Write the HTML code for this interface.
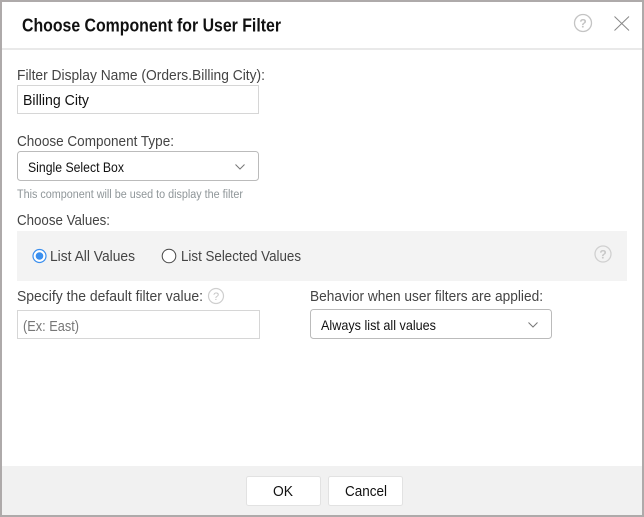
<!DOCTYPE html>
<html><head><meta charset="utf-8"><style>
html,body{margin:0;padding:0;background:#fff;width:644px;height:517px;overflow:hidden}
svg{display:block}
text{font-family:"Liberation Sans",sans-serif;font-size:15px;fill:#444}
.d{fill:#111}
.h{font-size:11.500px;fill:#8f9699}
</style></head><body>
<svg width="644" height="517" viewBox="0 0 644 517" xmlns="http://www.w3.org/2000/svg">
<rect width="644" height="517" fill="#fff"/>
<rect x="2" y="466" width="640" height="49" fill="#f1f1f1"/>
<path d="M1 1H643V516H1Z" fill="none" stroke="#aeaaaa" stroke-width="2"/>
<rect x="2" y="48" width="640" height="2" fill="#e9e9e9"/>
<text x="22" y="31.500" class="d" style="font-size:18px;font-weight:bold" textLength="259" lengthAdjust="spacingAndGlyphs">Choose Component for User Filter</text>
<circle cx="583" cy="23" r="8.500" fill="none" stroke="#c4c4c4" stroke-width="1.300"/>
<text x="583" y="27.500" text-anchor="middle" style="font-size:12px;font-weight:bold;fill:#c4c4c4">?</text>
<path d="M614.500 16.500L629 30.500M629 16.500L614.500 30.500" stroke="#888" stroke-width="1" fill="none"/>
<text x="17" y="80" textLength="248" lengthAdjust="spacingAndGlyphs">Filter Display Name (Orders.Billing City):</text>
<rect x="17.500" y="85.500" width="241" height="28" fill="#fff" stroke="#d6d6d6"/>
<text x="23" y="105" class="d" textLength="66" lengthAdjust="spacingAndGlyphs">Billing City</text>
<text x="17" y="146" textLength="157" lengthAdjust="spacingAndGlyphs">Choose Component Type:</text>
<rect x="17.500" y="151.500" width="241" height="29" rx="3" fill="#fff" stroke="#bbb"/>
<text x="28" y="172" class="d" style="font-size:14px" textLength="96" lengthAdjust="spacingAndGlyphs">Single Select Box</text>
<path d="M235.500 164.500L240 169L244.500 164.500" fill="none" stroke="#777" stroke-width="1"/>
<text x="17" y="198" class="h" textLength="226" lengthAdjust="spacingAndGlyphs">This component will be used to display the filter</text>
<text x="17" y="225" textLength="93" lengthAdjust="spacingAndGlyphs">Choose Values:</text>
<rect x="17" y="231" width="610" height="50" fill="#f3f3f3"/>
<circle cx="39.500" cy="256" r="6.500" fill="#fff" stroke="#3b8fee" stroke-width="1.200"/>
<circle cx="39.500" cy="256" r="3.800" fill="#3b8fee"/>
<text x="50" y="261" textLength="85" lengthAdjust="spacingAndGlyphs">List All Values</text>
<circle cx="169" cy="256" r="6.800" fill="#fff" stroke="#444" stroke-width="1"/>
<text x="181" y="261" textLength="120" lengthAdjust="spacingAndGlyphs">List Selected Values</text>
<circle cx="603" cy="254" r="8" fill="none" stroke="#d0d0d0" stroke-width="1.300"/>
<text x="603" y="258.500" text-anchor="middle" style="font-size:12px;font-weight:bold;fill:#c8c8c8">?</text>
<text x="17" y="301" textLength="186" lengthAdjust="spacingAndGlyphs">Specify the default filter value:</text>
<circle cx="216" cy="296" r="7.500" fill="none" stroke="#cfcfcf" stroke-width="1.200"/>
<text x="216" y="300" text-anchor="middle" style="font-size:11px;fill:#c4c4c4">?</text>
<rect x="17.500" y="310.500" width="242" height="28" fill="#fff" stroke="#d6d6d6"/>
<text x="23" y="331" style="fill:#777" textLength="56" lengthAdjust="spacingAndGlyphs">(Ex: East)</text>
<text x="310" y="301" textLength="233" lengthAdjust="spacingAndGlyphs">Behavior when user filters are applied:</text>
<rect x="310.500" y="309.500" width="241" height="29" rx="3" fill="#fff" stroke="#bbb"/>
<text x="321" y="330" class="d" style="font-size:14px" textLength="115" lengthAdjust="spacingAndGlyphs">Always list all values</text>
<path d="M528.500 322.500L533 327L537.500 322.500" fill="none" stroke="#777" stroke-width="1"/>
<rect x="246.500" y="476.500" width="74" height="29" rx="2" fill="#fff" stroke="#e2e2e2"/>
<rect x="328.500" y="476.500" width="74" height="29" rx="2" fill="#fff" stroke="#e2e2e2"/>
<text x="273" y="496" class="d" textLength="20" lengthAdjust="spacingAndGlyphs">OK</text>
<text x="345" y="496" class="d" textLength="42" lengthAdjust="spacingAndGlyphs">Cancel</text>
</svg>
</body></html>
